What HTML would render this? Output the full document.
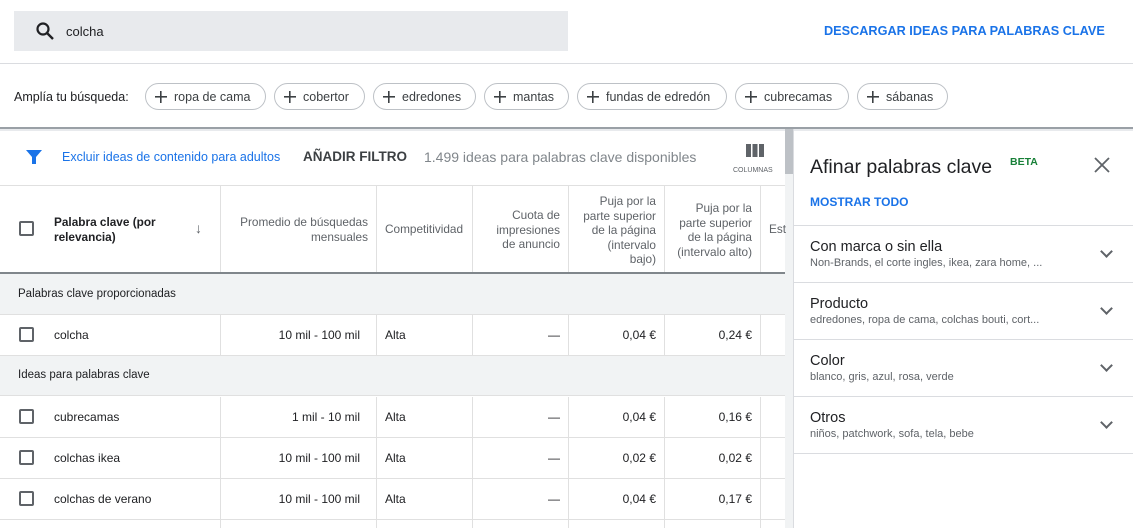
<!DOCTYPE html>
<html><head><meta charset="utf-8"><style>
*{margin:0;padding:0;box-sizing:border-box}
body{width:1133px;height:528px;overflow:hidden;background:#fff;font-family:"Liberation Sans",sans-serif;color:#202124;position:relative}
.a{position:absolute;white-space:nowrap}
.chip{position:absolute;top:83px;height:27px;border:1px solid #bdc1c6;border-radius:14px;font-size:12.5px;line-height:27px;padding-left:28px;color:#3c4043}
.chip:before{content:"";position:absolute;left:9px;top:7px;width:12px;height:12px;background:linear-gradient(#3c4043,#3c4043) center/12px 1.6px no-repeat,linear-gradient(#3c4043,#3c4043) center/1.6px 12px no-repeat}
.vl{position:absolute;width:1px;background:#e0e0e0}
.hl{position:absolute;height:1px;background:#e0e0e0;left:0;width:785px}
.cb{position:absolute;left:19px;width:15px;height:15px;border:2px solid #5f6368;border-radius:2px}
.t{position:absolute;font-size:12px;white-space:nowrap;color:#202124}
.h{position:absolute;font-size:11.8px;color:#5f6368;text-align:right;line-height:14.5px}
.sec{position:absolute;left:810px;font-size:14.5px;color:#202124}
.sub{position:absolute;left:810px;font-size:11px;color:#5f6368}
.chev{position:absolute;left:1102px;width:9px;height:9px;border-right:2px solid #5f6368;border-bottom:2px solid #5f6368;transform:rotate(45deg)}
</style></head><body>
<div class="a" style="left:14px;top:11px;width:554px;height:40px;background:#e8eaed"></div>
<svg class="a" style="left:35px;top:21px" width="20" height="20" viewBox="0 0 20 20"><circle cx="8" cy="8" r="5.5" fill="none" stroke="#202124" stroke-width="2.2"/><line x1="12" y1="12" x2="18" y2="18" stroke="#202124" stroke-width="2.4"/></svg>
<div class="a" style="left:66px;top:24px;font-size:13px">colcha</div>
<div class="a" style="left:824px;top:24px;font-size:12.7px;font-weight:bold;color:#1a73e8">DESCARGAR IDEAS PARA PALABRAS CLAVE</div>
<div class="a" style="left:0;top:63px;width:1133px;height:1px;background:#dadce0"></div>
<div class="a" style="left:14px;top:90px;font-size:12.5px">Amplía tu búsqueda:</div>
<div class="chip" style="left:145px;width:121px">ropa de cama</div>
<div class="chip" style="left:274px;width:91px">cobertor</div>
<div class="chip" style="left:373px;width:103px">edredones</div>
<div class="chip" style="left:484px;width:85px">mantas</div>
<div class="chip" style="left:577px;width:150px">fundas de edredón</div>
<div class="chip" style="left:735px;width:114px">cubrecamas</div>
<div class="chip" style="left:857px;width:91px">sábanas</div>
<div class="a" style="left:0;top:127px;width:1133px;height:2px;background:#9aa0a6"></div>
<div class="a" style="left:0;top:129px;width:1133px;height:2px;background:#e8eaed"></div>
<svg class="a" style="left:25px;top:148px" width="18" height="18" viewBox="0 0 18 18"><path d="M1 2h16l-6 7v7h-4v-7z" fill="#1a73e8"/></svg>
<div class="a" style="left:62px;top:150px;font-size:12.5px;color:#1a73e8">Excluir ideas de contenido para adultos</div>
<div class="a" style="left:303px;top:149px;font-size:13.5px;color:#3c4043;font-weight:600">AÑADIR FILTRO</div>
<div class="a" style="left:424px;top:149px;font-size:14px;color:#80868b">1.499 ideas para palabras clave disponibles</div>
<div class="a" style="left:746px;top:144px;width:18px;height:13px;background:linear-gradient(90deg,#5f6368 0 5px,#fff 5px 6.5px,#5f6368 6.5px 11.5px,#fff 11.5px 13px,#5f6368 13px)"></div>
<div class="a" style="left:733px;top:167px;font-size:7px;color:#5f6368">COLUMNAS</div>
<div class="a" style="left:785px;top:129px;width:8px;height:399px;background:#f1f3f4"></div>
<div class="a" style="left:785px;top:129px;width:8px;height:45px;background:#bdc1c6"></div>
<div class="hl" style="top:185px"></div>
<div class="vl" style="left:220px;top:186px;height:86px"></div>
<div class="vl" style="left:376px;top:186px;height:86px"></div>
<div class="vl" style="left:472px;top:186px;height:86px"></div>
<div class="vl" style="left:568px;top:186px;height:86px"></div>
<div class="vl" style="left:664px;top:186px;height:86px"></div>
<div class="vl" style="left:760px;top:186px;height:86px"></div>
<div class="cb" style="top:221px"></div>
<div class="a" style="left:54px;top:215px;font-size:11.8px;font-weight:bold;line-height:14.5px">Palabra clave (por<br>relevancia)</div>
<div class="a" style="left:195px;top:220px;font-size:14px;color:#5f6368">↓</div>
<div class="h" style="right:765px;top:215px">Promedio de búsquedas<br>mensuales</div>
<div class="h" style="left:385px;top:222px;width:86px;overflow:hidden;text-align:left">Competitividad</div>
<div class="h" style="right:573px;top:208px">Cuota de<br>impresiones<br>de anuncio</div>
<div class="h" style="right:477px;top:194px">Puja por la<br>parte superior<br>de la página<br>(intervalo<br>bajo)</div>
<div class="h" style="right:381px;top:201px">Puja por la<br>parte superior<br>de la página<br>(intervalo alto)</div>
<div class="h" style="left:769px;top:222px;text-align:left">Est</div>
<div class="a" style="left:0;top:272px;width:785px;height:2px;background:#80868b"></div>
<div class="a" style="left:0;top:274px;width:785px;height:40px;background:#f1f3f4"></div>
<div class="t" style="left:18px;top:288px;font-size:11.5px">Palabras clave proporcionadas</div>
<div class="hl" style="top:314px"></div>
<div class="a" style="left:0;top:355px;width:785px;height:41px;background:#f1f3f4;border-top:1px solid #e0e0e0;border-bottom:1px solid #e0e0e0"></div>
<div class="t" style="left:18px;top:369px;font-size:11.5px">Ideas para palabras clave</div>
<div class="hl" style="top:437px"></div>
<div class="hl" style="top:478px"></div>
<div class="hl" style="top:519px"></div>
<div class="vl" style="left:220px;top:315px;height:40px"></div><div class="vl" style="left:376px;top:315px;height:40px"></div><div class="vl" style="left:472px;top:315px;height:40px"></div><div class="vl" style="left:568px;top:315px;height:40px"></div><div class="vl" style="left:664px;top:315px;height:40px"></div><div class="vl" style="left:760px;top:315px;height:40px"></div>
<div class="vl" style="left:220px;top:397px;height:131px"></div><div class="vl" style="left:376px;top:397px;height:131px"></div><div class="vl" style="left:472px;top:397px;height:131px"></div><div class="vl" style="left:568px;top:397px;height:131px"></div><div class="vl" style="left:664px;top:397px;height:131px"></div><div class="vl" style="left:760px;top:397px;height:131px"></div>
<div class="cb" style="top:327px"></div><div class="t" style="left:54px;top:328px">colcha</div><div class="t" style="right:773px;top:328px">10 mil - 100 mil</div><div class="t" style="left:385px;top:328px">Alta</div><div class="t" style="right:573px;top:328px">—</div><div class="t" style="right:477px;top:328px">0,04 €</div><div class="t" style="right:381px;top:328px">0,24 €</div>
<div class="cb" style="top:409px"></div><div class="t" style="left:54px;top:410px">cubrecamas</div><div class="t" style="right:773px;top:410px">1 mil - 10 mil</div><div class="t" style="left:385px;top:410px">Alta</div><div class="t" style="right:573px;top:410px">—</div><div class="t" style="right:477px;top:410px">0,04 €</div><div class="t" style="right:381px;top:410px">0,16 €</div>
<div class="cb" style="top:450px"></div><div class="t" style="left:54px;top:451px">colchas ikea</div><div class="t" style="right:773px;top:451px">10 mil - 100 mil</div><div class="t" style="left:385px;top:451px">Alta</div><div class="t" style="right:573px;top:451px">—</div><div class="t" style="right:477px;top:451px">0,02 €</div><div class="t" style="right:381px;top:451px">0,02 €</div>
<div class="cb" style="top:491px"></div><div class="t" style="left:54px;top:492px">colchas de verano</div><div class="t" style="right:773px;top:492px">10 mil - 100 mil</div><div class="t" style="left:385px;top:492px">Alta</div><div class="t" style="right:573px;top:492px">—</div><div class="t" style="right:477px;top:492px">0,04 €</div><div class="t" style="right:381px;top:492px">0,17 €</div>
<div class="a" style="left:793px;top:129px;width:1px;height:399px;background:#dadce0"></div>
<div class="a" style="left:810px;top:156px;font-size:19.5px">Afinar palabras clave</div>
<div class="a" style="left:1010px;top:156px;font-size:10.5px;font-weight:bold;color:#188038">BETA</div>
<svg class="a" style="left:1094px;top:157px" width="16" height="16" viewBox="0 0 16 16"><path d="M1 1L15 15M15 1L1 15" stroke="#5f6368" stroke-width="1.8"/></svg>
<div class="a" style="left:810px;top:195px;font-size:12px;font-weight:bold;color:#1a73e8">MOSTRAR TODO</div>
<div class="a" style="left:794px;top:225px;width:339px;height:1px;background:#dadce0"></div>
<div class="a" style="left:794px;top:282px;width:339px;height:1px;background:#dadce0"></div>
<div class="a" style="left:794px;top:339px;width:339px;height:1px;background:#dadce0"></div>
<div class="a" style="left:794px;top:396px;width:339px;height:1px;background:#dadce0"></div>
<div class="a" style="left:794px;top:453px;width:339px;height:1px;background:#dadce0"></div>
<div class="sec" style="top:239px">Con marca o sin ella</div><div class="sub" style="top:257px">Non-Brands, el corte ingles, ikea, zara home, ...</div><div class="chev" style="top:247px"></div>
<div class="sec" style="top:296px">Producto</div><div class="sub" style="top:314px">edredones, ropa de cama, colchas bouti, cort...</div><div class="chev" style="top:304px"></div>
<div class="sec" style="top:353px">Color</div><div class="sub" style="top:371px">blanco, gris, azul, rosa, verde</div><div class="chev" style="top:361px"></div>
<div class="sec" style="top:410px">Otros</div><div class="sub" style="top:428px">niños, patchwork, sofa, tela, bebe</div><div class="chev" style="top:418px"></div>
</body></html>
